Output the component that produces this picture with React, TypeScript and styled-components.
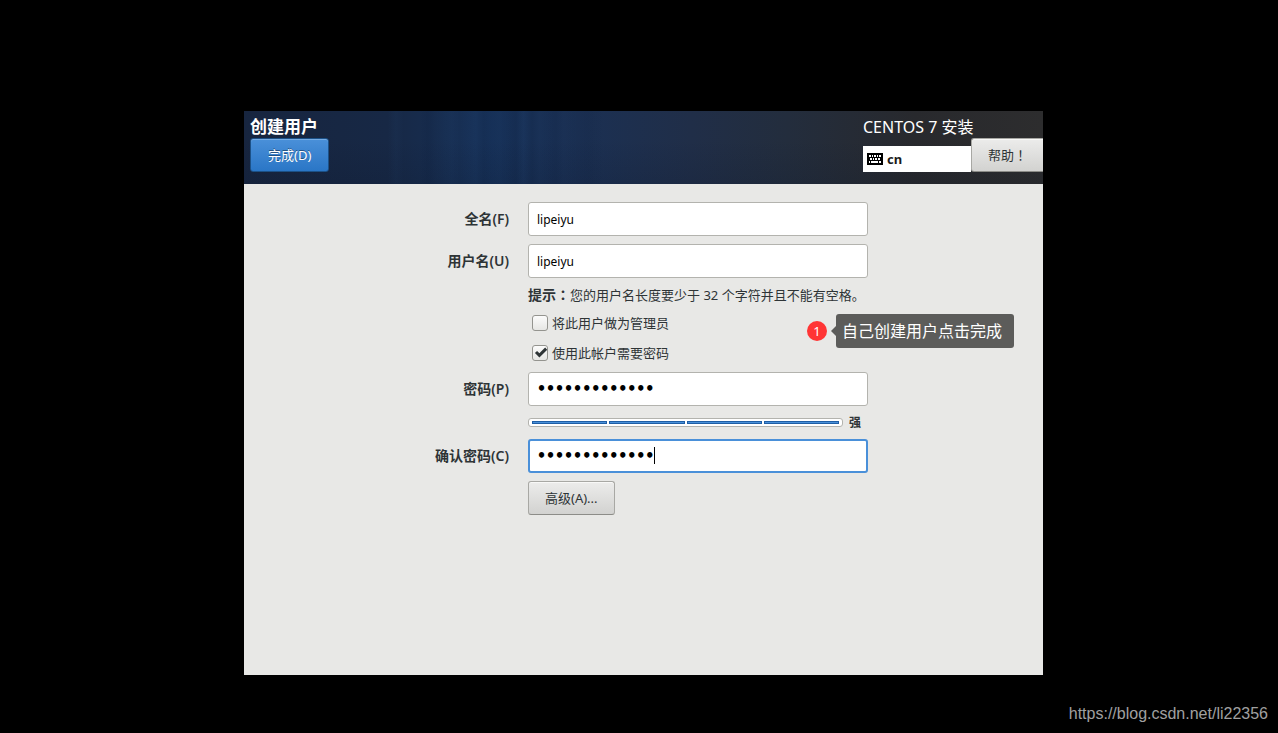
import React from "react";
import styled, { createGlobalStyle, css } from "styled-components";

const GlobalStyle = createGlobalStyle`
  * { box-sizing: border-box; }
  body {
    margin: 0;
    background: #000;
    color: #2e3436;
    font: 13px/18px "Noto Sans", "Noto Sans CJK SC", sans-serif;
  }
  button, input { font: inherit; color: inherit; margin: 0; }
`;

const Screen = styled.main`
  min-height: 100vh;
  display: grid;
  grid-template-columns: 244fr 799fr 235fr;
  grid-template-rows: 111px 1fr 58px;
`;

const Installer = styled.section`
  grid-area: 2 / 2;
  display: flex;
  flex-direction: column;
  background: #e8e8e6;
`;

const Header = styled.header`
  display: flex;
  justify-content: space-between;
  padding: 5px 0 12px 6px;
  color: #fff;
  background:
    linear-gradient(180deg, rgba(10, 20, 40, 0) 40%, rgba(10, 20, 40, 0.16)),
    linear-gradient(90deg, transparent 18%, rgba(50, 100, 160, 0.06) 19%, transparent 20%,
      transparent 22%, rgba(8, 22, 50, 0.12) 23%, transparent 24%,
      rgba(50, 100, 160, 0.05) 26%, transparent 27%, rgba(50, 100, 160, 0.05) 29%,
      rgba(8, 22, 50, 0.1) 30%, transparent 32%, rgba(8, 22, 50, 0.16) 34%,
      rgba(50, 100, 160, 0.04) 35%, rgba(8, 22, 50, 0.14) 36%, transparent 37%,
      rgba(8, 22, 50, 0.12) 39%, transparent 40%, rgba(8, 22, 50, 0.1) 43%, transparent 45%),
    linear-gradient(90deg, #17253f 0%, #172845 18%, #17325a 31%, #1b3053 42%,
      #202e48 56%, #232d3d 68%, #28292d 84%, #2d2d2e 100%);
`;

const TitleBlock = styled.div`
  display: flex;
  flex-direction: column;
  align-items: flex-start;
`;

const Title = styled.h1`
  margin: 0;
  font-size: 17px;
  line-height: 22px;
  font-weight: 700;
`;

const ProductBlock = styled.div`
  width: 180px;
`;

const Product = styled.div`
  font-size: 16px;
  line-height: 22px;
`;

const Tools = styled.div`
  display: flex;
  align-items: flex-end;
`;

const Keyboard = styled.div`
  flex: 1;
  height: 26px;
  padding: 0 4px;
  display: flex;
  align-items: center;
  gap: 4px;
  background: #fff;
  color: #1a1a1a;
  font-weight: 700;
`;

const Button = styled.button<{ $primary?: boolean; $flush?: boolean }>`
  height: 34px;
  padding: 0 16px;
  border: 1px solid #a8a8a4;
  border-bottom-color: #8c8c88;
  border-radius: 3px;
  background: linear-gradient(#ececeb, #d2d2d0);
  box-shadow: inset 0 1px #f8f8f7;
  color: #2e3436;
  white-space: nowrap;
  ${(p) => p.$primary && css`
    padding: 0 17px;
    border-color: #1c5187;
    background: linear-gradient(#4a90d9, #2a76c6);
    box-shadow: inset 0 1px #76abe3;
    color: #fff;
    text-shadow: 0 -1px rgba(0, 0, 0, 0.4);
  `}
  ${(p) => p.$flush && css`
    border-right: 0;
    border-radius: 3px 0 0 3px;
  `}
`;

const Punctuation = styled.span`
  font-family: "Noto Sans CJK TC", sans-serif;
  line-height: 1;
`;

const Form = styled.form`
  position: relative;
  flex: 1;
  display: grid;
  grid-template-columns: 265fr 340fr 156fr;
  column-gap: 19px;
  row-gap: 8px;
  align-content: start;
  padding-top: 18px;
`;

const Label = styled.label`
  grid-column: 1;
  justify-self: end;
  align-self: center;
  font-size: 14px;
  font-weight: 600;
`;

const Field = styled.div`
  grid-column: 2;
  position: relative;
  display: flex;
`;

const Input = styled.input<{ $active?: boolean }>`
  width: 100%;
  height: 34px;
  padding: 0 8px;
  border: 1px solid #b3b3ae;
  border-radius: 3px;
  background: #fff;
  color: #000;
  font-size: 12px;
  outline: none;
  &[type="password"] {
    font-family: "DejaVu Sans Mono", monospace;
    font-size: 15px;
    font-weight: 700;
  }
  ${(p) => p.$active && css`
    padding: 0 7px;
    border: 2px solid #4a90d9;
  `}
`;

const Caret = styled.span`
  position: absolute;
  left: 126px;
  top: 8px;
  width: 1px;
  height: 17px;
  background: #000;
`;

const Hint = styled.p`
  grid-column: 2;
  margin: 0;
  white-space: nowrap;
  b { font-size: 14px; line-height: 1; }
`;

const CheckLabel = styled.label`
  grid-column: 2;
  height: 22px;
  padding-left: 4px;
  display: flex;
  align-items: center;
  gap: 4px;
`;

const Checkbox = styled.input`
  appearance: none;
  width: 16px;
  height: 16px;
  border: 1px solid #94948f;
  border-radius: 3px;
  background: linear-gradient(#fbfbfb, #e6e6e4);
  &:checked {
    background: url("data:image/svg+xml,%3Csvg xmlns='http://www.w3.org/2000/svg' viewBox='0 0 14 14'%3E%3Cpath d='M3 6 6.4 9.4 13.2 2.6' fill='none' stroke='%232e3436' stroke-width='3'/%3E%3C/svg%3E"),
      linear-gradient(#fbfbfb, #e6e6e4);
  }
`;

const Strength = styled.div`
  grid-column: 2;
  height: 17px;
  display: flex;
  align-items: center;
  gap: 6px;
  padding-right: 7px;
  font-size: 12px;
  line-height: 17px;
  font-weight: 700;
`;

const Meter = styled.div`
  flex: 1;
  height: 9px;
  padding: 2px 3px;
  display: flex;
  gap: 2px;
  border: 1px solid #b3b3ae;
  border-radius: 3px;
  background: #fff;
`;

const Segment = styled.span`
  flex: 1;
  border: 1px solid #1f5fa6;
  background: #4a90d9;
`;

const Actions = styled.div`
  grid-column: 2;
`;

const Callout = styled.aside`
  position: absolute;
  top: 130px;
  right: 29px;
  display: flex;
  align-items: center;
  gap: 9px;
  color: #fff;
`;

const Badge = styled.span`
  width: 20px;
  height: 20px;
  border-radius: 50%;
  background: #ff3535;
  font-size: 13px;
  line-height: 20px;
  text-align: center;
`;

const Bubble = styled.span`
  position: relative;
  height: 34px;
  padding: 0 12px 0 6px;
  border-radius: 3px;
  background: #5c5c5a;
  font-size: 16px;
  line-height: 34px;
  &::before {
    content: "";
    position: absolute;
    right: 100%;
    top: 12px;
    border: solid transparent;
    border-width: 5px 5px 5px 0;
    border-right-color: #5c5c5a;
  }
`;

const Footer = styled.footer`
  grid-area: 3 / 1 / 4 / 4;
  align-self: end;
  padding: 0 10px 9px;
  text-align: right;
  font: 16px/20px "Liberation Sans", sans-serif;
  color: #a0a0a0;
`;

function KeyboardIcon() {
  return (
    <svg width="16" height="12" viewBox="0 0 16 12" shapeRendering="crispEdges" aria-hidden="true">
      <rect width="16" height="12" rx="1" fill="#000" />
      <path
        d="M2 2h2v2H2zM5 2h1v2H5zM7 2h2v2H7zM10 2h1v2h-1zM12 2h2v2h-2zM3 5h2v2H3zM6 5h1v2H6zM8 5h2v2H8zM11 5h2v2h-2zM2 8h1v2H2zM4 8h7v2H4zM12 8h2v2h-2z"
        fill="#fff"
      />
    </svg>
  );
}

export default function App() {
  return (
    <>
      <GlobalStyle />
      <Screen>
        <Installer>
          <Header>
            <TitleBlock>
              <Title>创建用户</Title>
              <Button type="button" $primary>完成(D)</Button>
            </TitleBlock>
            <ProductBlock>
              <Product>CENTOS 7 安装</Product>
              <Tools>
                <Keyboard><KeyboardIcon />cn</Keyboard>
                <Button type="button" $flush>帮助<Punctuation>！</Punctuation></Button>
              </Tools>
            </ProductBlock>
          </Header>
          <Form>
            <Label htmlFor="fullname">全名(F)</Label>
            <Field><Input id="fullname" type="text" defaultValue="lipeiyu" /></Field>
            <Label htmlFor="username">用户名(U)</Label>
            <Field><Input id="username" type="text" defaultValue="lipeiyu" /></Field>
            <Hint><b>提示<Punctuation>：</Punctuation></b>您的用户名长度要少于 32 个字符并且不能有空格。</Hint>
            <CheckLabel><Checkbox type="checkbox" />将此用户做为管理员</CheckLabel>
            <CheckLabel><Checkbox type="checkbox" defaultChecked />使用此帐户需要密码</CheckLabel>
            <Label htmlFor="password">密码(P)</Label>
            <Field><Input id="password" type="password" defaultValue="abcdefghijklm" /></Field>
            <Strength>
              <Meter><Segment /><Segment /><Segment /><Segment /></Meter>
              强
            </Strength>
            <Label htmlFor="confirm">确认密码(C)</Label>
            <Field>
              <Input id="confirm" type="password" defaultValue="abcdefghijklm" $active />
              <Caret />
            </Field>
            <Actions><Button type="button">高级(A)...</Button></Actions>
            <Callout>
              <Badge>1</Badge>
              <Bubble>自己创建用户点击完成</Bubble>
            </Callout>
          </Form>
        </Installer>
        <Footer>https://blog.csdn.net/li22356</Footer>
      </Screen>
    </>
  );
}
